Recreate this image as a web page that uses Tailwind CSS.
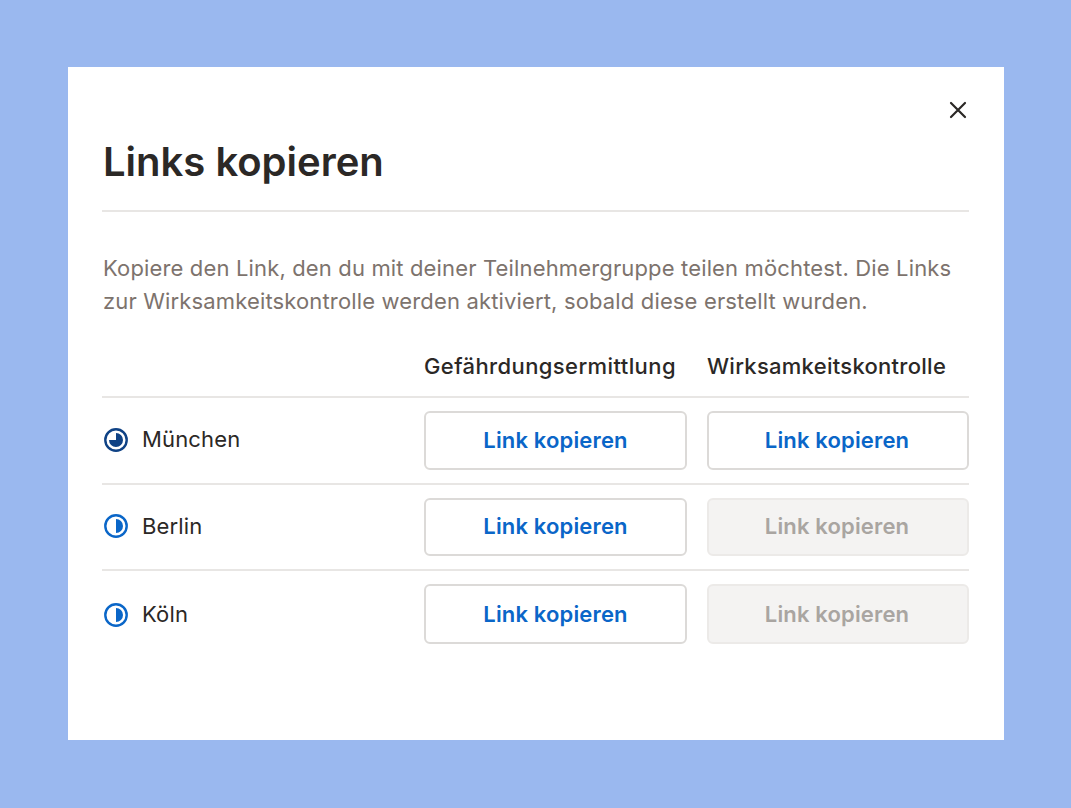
<!DOCTYPE html>
<html lang="de">
<head>
  <meta charset="UTF-8" />
  <title>Links kopieren</title>
  <script src="https://cdn.jsdelivr.net/npm/@tailwindcss/browser@4"></script>
</head>
<body class="bg-[#9ab8ef] font-['Inter',sans-serif] text-[#2b2826]">
  <div class="h-[808px] w-[1071px] pt-[67px] pl-[68px]">
    <div class="relative h-[673px] w-[936px] bg-white pr-[35px] pl-[34px] pt-[69px]">
      <button class="absolute top-[33px] right-[36px] text-[#2b2826]">
        <svg width="20" height="20" viewBox="0 0 20 20" fill="none" stroke="currentColor" stroke-width="2.2" stroke-linecap="round"><path d="M3 3 17 17M17 3 3 17"/></svg>
      </button>

      <h1 class="h-[76px] border-b-2 border-[#e8e6e4] pl-[1px] text-[40px] leading-[52px] font-semibold">Links kopieren</h1>

      <p class="mt-[40px] pl-[1px] text-[22px] leading-[33px] tracking-[0.15px] text-[#7d736d]">Kopiere den Link, den du mit deiner Teilnehmergruppe teilen möchtest. Die Links zur Wirksamkeitskontrolle werden aktiviert, sobald diese erstellt wurden.</p>

      <!-- Tabelle -->
      <div class="mt-[27px] flex h-[53px] items-start border-b-2 border-[#e8e6e4] pt-[6px] text-[22px] leading-[30px] font-medium">
        <div class="w-[322px]"></div>
        <div class="w-[283px] tracking-[0.4px]">Gefährdungsermittlung</div>
        <div class="tracking-[0.28px]">Wirksamkeitskontrolle</div>
      </div>

      <div class="flex h-[87px] items-center gap-[20px] border-b-2 border-[#e8e6e4]">
        <div class="mb-[2px] flex w-[302px] items-center gap-[14px] pl-[2px] text-[22px] tracking-[0.15px]">
          <svg width="24" height="24" viewBox="0 0 24 24"><circle cx="12" cy="12" r="10.7" fill="none" stroke="#0f4285" stroke-width="2.4"/><path d="M12 5a7 7 0 1 1-7 7h7z" fill="#0f4285"/></svg>
          <span>München</span>
        </div>
        <button class="mb-[1px] h-[59px] w-[263px] rounded-md border-2 border-[#dcdad8] bg-white text-[22px] font-semibold tracking-[0.15px] text-[#0a66c8]">Link kopieren</button>
        <button class="mb-[1px] h-[59px] w-[262px] rounded-md border-2 border-[#dcdad8] bg-white pr-[2px] text-[22px] font-semibold tracking-[0.15px] text-[#0a66c8]">Link kopieren</button>
      </div>

      <div class="flex h-[86px] items-center gap-[20px] border-b-2 border-[#e8e6e4]">
        <div class="mb-[2px] flex w-[302px] items-center gap-[14px] pl-[2px] text-[22px] tracking-[0.15px]">
          <svg width="24" height="24" viewBox="0 0 24 24"><circle cx="12" cy="12" r="10.7" fill="none" stroke="#0a66c8" stroke-width="2.4"/><path d="M12 5a7 7 0 0 1 0 14z" fill="#0a66c8"/></svg>
          <span>Berlin</span>
        </div>
        <button class="h-[58px] w-[263px] rounded-md border-2 border-[#dcdad8] bg-white pb-[2px] text-[22px] font-semibold tracking-[0.15px] text-[#0a66c8]">Link kopieren</button>
        <button class="h-[58px] w-[262px] rounded-md border-2 border-[#eceae8] bg-[#f4f3f2] pr-[2px] pb-[2px] text-[22px] font-semibold tracking-[0.15px] text-[#a9a5a1]">Link kopieren</button>
      </div>

      <div class="flex h-[87px] items-center gap-[20px] pb-[2px]">
        <div class="mt-[2px] flex w-[302px] items-center gap-[14px] pl-[2px] text-[22px] tracking-[0.15px]">
          <svg width="24" height="24" viewBox="0 0 24 24"><circle cx="12" cy="12" r="10.7" fill="none" stroke="#0a66c8" stroke-width="2.4"/><path d="M12 5a7 7 0 0 1 0 14z" fill="#0a66c8"/></svg>
          <span>Köln</span>
        </div>
        <button class="h-[60px] w-[263px] rounded-md border-2 border-[#dcdad8] bg-white pt-[2px] text-[22px] font-semibold tracking-[0.15px] text-[#0a66c8]">Link kopieren</button>
        <button class="h-[60px] w-[262px] rounded-md border-2 border-[#eceae8] bg-[#f4f3f2] pt-[2px] pr-[2px] text-[22px] font-semibold tracking-[0.15px] text-[#a9a5a1]">Link kopieren</button>
      </div>
    </div>
  </div>
</body>
</html>
